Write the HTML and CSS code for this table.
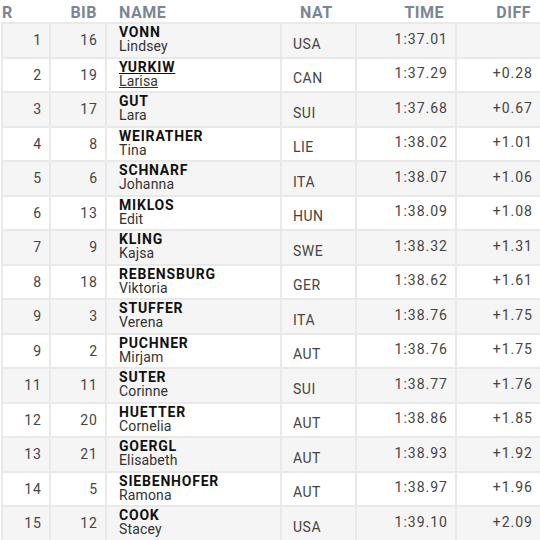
FILE: index.html
```html
<!DOCTYPE html>
<html>
<head>
<meta charset="utf-8">
<link rel="stylesheet" href="styles.css">
</head>
<body>
<table class="results">
  <colgroup>
    <col class="c-r"><col class="c-bib"><col class="c-name"><col class="c-nat"><col class="c-time"><col class="c-diff">
  </colgroup>
  <thead>
    <tr>
      <th class="h-r">R</th>
      <th class="h-bib">BIB</th>
      <th class="h-name">NAME</th>
      <th class="h-nat">NAT</th>
      <th class="h-time">TIME</th>
      <th class="h-diff">DIFF</th>
    </tr>
  </thead>
  <tbody>
    <tr><td class="num">1</td><td class="num">16</td><td class="name"><span class="last">VONN</span><span class="first">Lindsey</span></td><td class="nat">USA</td><td class="time">1:37.01</td><td class="time"></td></tr>
    <tr class="linked"><td class="num">2</td><td class="num">19</td><td class="name"><span class="last">YURKIW</span><span class="first">Larisa</span></td><td class="nat">CAN</td><td class="time">1:37.29</td><td class="time">+0.28</td></tr>
    <tr><td class="num">3</td><td class="num">17</td><td class="name"><span class="last">GUT</span><span class="first">Lara</span></td><td class="nat">SUI</td><td class="time">1:37.68</td><td class="time">+0.67</td></tr>
    <tr><td class="num">4</td><td class="num">8</td><td class="name"><span class="last">WEIRATHER</span><span class="first">Tina</span></td><td class="nat">LIE</td><td class="time">1:38.02</td><td class="time">+1.01</td></tr>
    <tr><td class="num">5</td><td class="num">6</td><td class="name"><span class="last">SCHNARF</span><span class="first">Johanna</span></td><td class="nat">ITA</td><td class="time">1:38.07</td><td class="time">+1.06</td></tr>
    <tr><td class="num">6</td><td class="num">13</td><td class="name"><span class="last">MIKLOS</span><span class="first">Edit</span></td><td class="nat">HUN</td><td class="time">1:38.09</td><td class="time">+1.08</td></tr>
    <tr><td class="num">7</td><td class="num">9</td><td class="name"><span class="last">KLING</span><span class="first">Kajsa</span></td><td class="nat">SWE</td><td class="time">1:38.32</td><td class="time">+1.31</td></tr>
    <tr><td class="num">8</td><td class="num">18</td><td class="name"><span class="last">REBENSBURG</span><span class="first">Viktoria</span></td><td class="nat">GER</td><td class="time">1:38.62</td><td class="time">+1.61</td></tr>
    <tr><td class="num">9</td><td class="num">3</td><td class="name"><span class="last">STUFFER</span><span class="first">Verena</span></td><td class="nat">ITA</td><td class="time">1:38.76</td><td class="time">+1.75</td></tr>
    <tr><td class="num">9</td><td class="num">2</td><td class="name"><span class="last">PUCHNER</span><span class="first">Mirjam</span></td><td class="nat">AUT</td><td class="time">1:38.76</td><td class="time">+1.75</td></tr>
    <tr><td class="num">11</td><td class="num">11</td><td class="name"><span class="last">SUTER</span><span class="first">Corinne</span></td><td class="nat">SUI</td><td class="time">1:38.77</td><td class="time">+1.76</td></tr>
    <tr><td class="num">12</td><td class="num">20</td><td class="name"><span class="last">HUETTER</span><span class="first">Cornelia</span></td><td class="nat">AUT</td><td class="time">1:38.86</td><td class="time">+1.85</td></tr>
    <tr><td class="num">13</td><td class="num">21</td><td class="name"><span class="last">GOERGL</span><span class="first">Elisabeth</span></td><td class="nat">AUT</td><td class="time">1:38.93</td><td class="time">+1.92</td></tr>
    <tr><td class="num">14</td><td class="num">5</td><td class="name"><span class="last">SIEBENHOFER</span><span class="first">Ramona</span></td><td class="nat">AUT</td><td class="time">1:38.97</td><td class="time">+1.96</td></tr>
    <tr><td class="num">15</td><td class="num">12</td><td class="name"><span class="last">COOK</span><span class="first">Stacey</span></td><td class="nat">USA</td><td class="time">1:39.10</td><td class="time">+2.09</td></tr>
  </tbody>
</table>
</body>
</html>
```

FILE: styles.css
```css
html, body {
  margin: 0;
  padding: 0;
  background: #ffffff;
  overflow: hidden;
}

body {
  font-family: Roboto, "Liberation Sans", sans-serif;
  color: #333333;
}

.results {
  border-collapse: collapse;
  table-layout: fixed;
  width: 541px;
  margin-left: 1px;
}

.c-r { width: 48px; }
.c-bib { width: 56px; }
.c-name { width: 175px; }
.c-nat { width: 75px; }
.c-time { width: 100px; }
.c-diff { width: 85px; }

thead th {
  padding: 5px 0 1px 0;
  line-height: 16px;
  font-size: 16px;
  font-weight: bold;
  letter-spacing: 0.5px;
  color: #7a8696;
  vertical-align: top;
  border: none;
}

.h-r { text-align: left; }
.h-bib { text-align: right; padding-right: 9px; }
.h-name { text-align: left; padding-left: 13px; }
.h-nat { text-align: left; padding-left: 19px; }
.h-time { text-align: right; padding-right: 12px; }
.h-diff { text-align: right; padding-right: 10px; }

tbody tr { height: 34.5px; }
tbody tr:nth-child(odd) { background: #f5f5f5; }
tbody tr:nth-child(even) { background: #ffffff; }

tbody td {
  border: 2px solid #e9e9e9;
  padding: 0;
  font-size: 14px;
  color: #444444;
  vertical-align: middle;
}

td.num {
  text-align: right;
  padding-right: 7px;
  letter-spacing: 1px;
}

td.name {
  padding: 0 2px 2px 12px;
  line-height: 14px;
}

.last {
  display: block;
  font-weight: bold;
  letter-spacing: 0.8px;
  color: #111111;
  white-space: nowrap;
}

.first {
  display: block;
  letter-spacing: 0.15px;
  color: #333333;
}

.linked .last,
.linked .first {
  display: table;
  text-decoration: underline;
}

td.nat {
  padding: 7px 0 0 11px;
  text-align: left;
  letter-spacing: 0.5px;
}

td.time {
  text-align: right;
  padding: 0 7px 3px 0;
  letter-spacing: 1px;
}
```
